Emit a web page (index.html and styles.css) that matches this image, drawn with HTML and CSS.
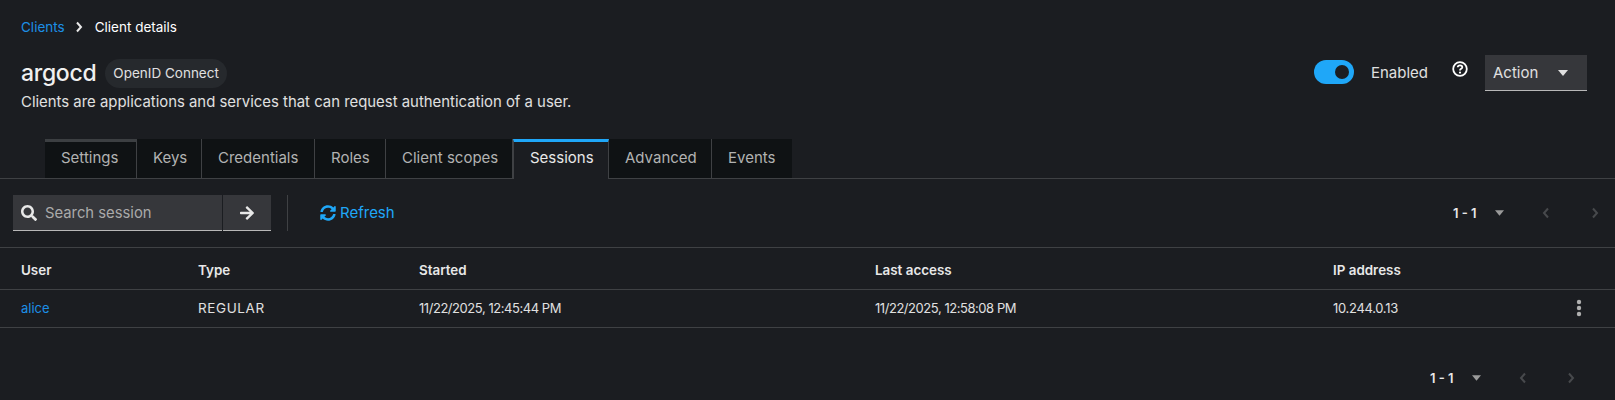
FILE: index.html
```html
<!DOCTYPE html>
<html lang="en">
<head>
  <meta charset="UTF-8" />
  <title>Client details</title>
  <link rel="stylesheet" href="styles.css">
</head>
<body>
  <header class="page-head">
    <nav class="crumbs">
      <a href="#">Clients</a>
      <svg class="crumb-sep" viewBox="0 0 8 12"><path d="M2 1.500 6 6l-4 4.500" /></svg>
      <span>Client details</span>
    </nav>
    <div class="title-row">
      <div class="title-main">
        <div class="title-line">
          <h1>argocd</h1>
          <span class="badge">OpenID Connect</span>
        </div>
        <p class="desc">Clients are applications and services that can request authentication of a user.</p>
      </div>
      <div class="title-actions">
        <span class="toggle"><span class="knob"></span></span>
        <span class="toggle-label">Enabled</span>
        <svg class="help" viewBox="0 0 16 16">
          <circle cx="8" cy="8" r="6.800" />
          <path d="M5.700 6.300C5.800 4.900 6.800 4.300 8 4.300c1.300 0 2.300.8 2.300 1.900 0 1.800-2.300 1.500-2.300 3.200" />
          <circle class="dot" cx="8" cy="11.600" r="1.100" />
        </svg>
        <button class="action">Action<svg class="caret" viewBox="0 0 10 6"><path d="M0 0h10L5 6z" /></svg></button>
      </div>
    </div>
  </header>

  <!-- Tabs -->
  <ul class="tabs">
    <li class="tab first">Settings</li>
    <li class="tab">Keys</li>
    <li class="tab">Credentials</li>
    <li class="tab">Roles</li>
    <li class="tab">Client scopes</li>
    <li class="tab current">Sessions</li>
    <li class="tab">Advanced</li>
    <li class="tab">Events</li>
  </ul>

  <!-- Toolbar -->
  <div class="toolbar">
    <div class="search">
      <svg class="search-icon" viewBox="0 0 512 512"><path d="M505 442.700L405.300 343c-4.500-4.500-10.600-7-17-7H372c27.600-35.300 44-79.700 44-128C416 93.100 322.900 0 208 0S0 93.100 0 208s93.100 208 208 208c48.300 0 92.700-16.400 128-44v16.300c0 6.400 2.500 12.500 7 17l99.700 99.700c9.400 9.400 24.600 9.400 33.900 0l28.300-28.300c9.400-9.400 9.400-24.600.1-34zM208 336c-70.700 0-128-57.200-128-128 0-70.700 57.200-128 128-128 70.700 0 128 57.200 128 128 0 70.700-57.200 128-128 128z" /></svg>
      <span>Search session</span>
    </div>
    <button class="go">
      <svg viewBox="0 0 448 512"><path d="M190.500 66.900l22.200-22.200c9.400-9.400 24.600-9.400 33.900 0L441 239c9.400 9.400 9.400 24.600 0 33.900L246.600 467.300c-9.400 9.400-24.600 9.400-33.900 0l-22.200-22.200c-9.500-9.500-9.300-25 .4-34.300L311.400 296H24c-13.300 0-24-10.700-24-24v-32c0-13.300 10.700-24 24-24h287.400L190.900 101.200c-9.800-9.300-10-24.800-.4-34.300z" /></svg>
    </button>
    <span class="divider"></span>
    <a class="refresh" href="#">
      <svg viewBox="0 0 512 512"><path d="M370.720 133.280C339.458 104.008 298.888 87.962 255.848 88c-77.458.068-144.328 53.178-162.791 126.850-1.344 5.363-6.122 9.150-11.651 9.150H24.103c-7.498 0-13.194-6.807-11.807-14.176C33.933 94.924 134.813 8 256 8c66.448 0 126.791 26.136 171.315 68.685L463.030 40.970C478.149 25.851 504 36.559 504 57.941V192c0 13.255-10.745 24-24 24H345.941c-21.382 0-32.090-25.851-16.971-40.971l41.750-41.749zM32 296h134.059c21.382 0 32.090 25.851 16.971 40.971l-41.750 41.750c31.262 29.273 71.835 45.319 114.876 45.280 77.418-.07 144.315-53.144 162.787-126.849 1.344-5.363 6.122-9.150 11.651-9.150h57.304c7.498 0 13.194 6.807 11.807 14.176C478.067 417.076 377.187 504 256 504c-66.448 0-126.791-26.136-171.315-68.685L48.970 471.030C33.851 486.149 8 475.441 8 454.059V320c0-13.255 10.745-24 24-24z" /></svg>
      Refresh
    </a>
    <div class="pager top">
      <b>1 - 1</b>
      <svg class="pager-caret" viewBox="0 0 10 6"><path d="M0 0h10L5 6z" /></svg>
      <svg class="pager-arrow prev" viewBox="0 0 8 12"><path d="M6 1.500 2 6l4 4.500" /></svg>
      <svg class="pager-arrow" viewBox="0 0 8 12"><path d="M2 1.500 6 6l-4 4.500" /></svg>
    </div>
  </div>

  <!-- Sessions table -->
  <table class="sessions">
    <thead>
      <tr><th class="c-user">User</th><th class="c-type">Type</th><th class="c-start">Started</th><th class="c-last">Last access</th><th class="c-ip">IP address</th><th></th></tr>
    </thead>
    <tbody>
      <tr>
        <td><a href="#">alice</a></td>
        <td class="kind">REGULAR</td>
        <td class="stamp">11/22/2025, 12:45:44 PM</td>
        <td class="stamp">11/22/2025, 12:58:08 PM</td>
        <td class="addr">10.244.0.13</td>
        <td class="c-menu"><svg class="kebab" viewBox="0 0 6 18"><circle cx="3" cy="3" r="2.200" /><circle cx="3" cy="9" r="2.200" /><circle cx="3" cy="15" r="2.200" /></svg></td>
      </tr>
    </tbody>
  </table>

  <div class="pager bottom">
    <b>1 - 1</b>
    <svg class="pager-caret" viewBox="0 0 10 6"><path d="M0 0h10L5 6z" /></svg>
    <svg class="pager-arrow prev" viewBox="0 0 8 12"><path d="M6 1.500 2 6l4 4.500" /></svg>
    <svg class="pager-arrow" viewBox="0 0 8 12"><path d="M2 1.500 6 6l-4 4.500" /></svg>
  </div>
</body>
</html>
```

FILE: styles.css
```css
:root {
  --bg: #1b1d21;
  --blue: #1fa7f8;
  --link: #1c8fe6;
  --text: #e0e0e0;
  --line: #3f4144;
  --field: #36373b;
}
* { box-sizing: border-box; margin: 0; padding: 0; }
html, body { height: 400px; overflow: hidden; }
body {
  background: var(--bg);
  color: var(--text);
  font-family: "Inter", "Open Sans", sans-serif;
  font-size: 14px;
}
a { color: var(--link); text-decoration: none; }

/* Header */
.page-head { padding: 18px 16px 0 21px; height: 139px; }
.crumbs { display: flex; align-items: center; height: 18px; font-size: 13.500px; color: #fff; }
.crumb-sep { width: 8px; height: 12px; margin: 0 12px 0 10px; }
.crumb-sep path { fill: none; stroke: #e8e8e8; stroke-width: 2; }
.title-row { display: flex; justify-content: space-between; margin-top: 18px; }
.title-line { display: flex; align-items: center; height: 30px; gap: 9px; margin-top: 4px; }
h1 { font-size: 23px; font-weight: 500; color: #f0f0f0; letter-spacing: -0.3px; }
.badge {
  background: #26292d;
  border-radius: 15px;
  height: 29px;
  line-height: 29px;
  padding: 0 8px;
  font-size: 13.500px;
  color: #e0e0e0;
}
.desc { font-size: 14.900px; margin-top: 5px; color: #e0e0e0; }
.title-actions { display: flex; align-items: flex-start; height: 36px; margin: 1px 12px 0 0; }
.toggle {
  width: 40px;
  height: 24px;
  margin-top: 5px;
  border-radius: 12px;
  background: var(--blue);
  display: flex;
  align-items: center;
  justify-content: flex-end;
  padding-right: 5px;
}
.knob { width: 14px; height: 14px; border-radius: 50%; background: #1b1d21; }
.toggle-label { margin: 9px 0 0 17px; font-size: 15px; line-height: 18px; }
.help { width: 16px; height: 16px; margin: 6px 17px 0 24px; }
.help circle, .help path { fill: none; stroke: #fff; stroke-width: 1.800; }
.help .dot { fill: #fff; stroke: none; }
.action {
  width: 102px;
  height: 36px;
  display: flex;
  align-items: center;
  justify-content: space-between;
  padding: 0 19px 0 8px;
  background: var(--field);
  border: none;
  border-bottom: 1px solid #b8b8b8;
  color: var(--text);
  font: inherit;
  font-size: 15px;
}
.caret { width: 10px; height: 6px; fill: #e0e0e0; }

/* Tabs */
.tabs { display: flex; list-style: none; height: 40px; padding-left: 45px; border-bottom: 1px solid var(--line); }
.tab {
  background: #0f1214;
  height: 39px;
  padding: 1px 0 0 16px;
  line-height: 36px;
  font-size: 15px;
  color: #b2b2b2;
  border-right: 1px solid var(--line);
}
.tab:nth-child(1) { width: 92px; border-top: 3px solid #3c3f42; padding-top: 0; line-height: 32px; }
.tab:nth-child(2) { width: 65px; }
.tab:nth-child(3) { width: 113px; }
.tab:nth-child(4) { width: 71px; }
.tab:nth-child(5) { width: 127px; }
.tab:nth-child(6) { width: 96px; }
.tab:nth-child(7) { width: 103px; }
.tab:nth-child(8) { width: 80px; border-right: none; }
.tab.current {
  background: var(--bg);
  height: 40px;
  line-height: 32px;
  color: #e8e8e8;
  border-top: 3px solid var(--blue);
  border-left: 1px solid var(--line);
  padding: 0 0 0 16px;
}

/* Toolbar */
.toolbar {
  display: flex;
  align-items: center;
  height: 69px;
  padding: 16px 16px 16px 13px;
  border-bottom: 1px solid var(--line);
}
.search {
  width: 209px;
  height: 36px;
  display: flex;
  align-items: center;
  gap: 8px;
  padding-left: 8px;
  background: var(--field);
  border-bottom: 1px solid #b8b8b8;
  color: #aaa;
  font-size: 14.800px;
}
.search-icon { width: 16px; height: 16px; fill: #e8e8e8; }
.go {
  width: 48px;
  height: 36px;
  margin-left: 1px;
  background: var(--field);
  border: none;
  border-bottom: 1px solid #b8b8b8;
}
.go svg { width: 14px; height: 16px; fill: #e8e8e8; vertical-align: middle; }
.divider { width: 1px; height: 36px; margin: 0 32px 0 16px; background: var(--line); }
.refresh { display: flex; align-items: center; gap: 4px; font-size: 15px; color: var(--blue); padding-bottom: 1px; }
.refresh svg { width: 16px; height: 16px; fill: var(--blue); }

/* Pagination */
.pager { display: flex; align-items: center; font-size: 13px; color: #e8e8e8; }
.pager b { font-weight: 600; width: 24px; white-space: nowrap; }
.pager.top { margin-left: auto; }
.pager.bottom { justify-content: flex-end; margin: 42px 40px 0 0; }
.pager-caret { width: 9px; height: 6px; margin: 0 38px 0 18px; fill: #9a9a9a; }
.pager-arrow { width: 8px; height: 12px; }
.pager-arrow.prev { margin-right: 40px; }
.pager.top .pager-arrow.prev { margin-right: 41px; }
.pager-arrow path { fill: none; stroke: #47494c; stroke-width: 2; }

/* Table */
.sessions { width: 100%; border-collapse: collapse; table-layout: fixed; }
.sessions th, .sessions td { text-align: left; padding: 0 0 0 21px; border-bottom: 1px solid var(--line); white-space: nowrap; }
.sessions th { height: 41px; padding-top: 3px; font-size: 13.400px; font-weight: 600; color: #e8e8e8; }
.sessions td { height: 38px; font-size: 13px; color: #e0e0e0; }
.sessions .kind { font-size: 13.500px; letter-spacing: 0.6px; }
.sessions .stamp { letter-spacing: -0.45px; }
.sessions .addr { letter-spacing: -0.3px; }
.c-user { width: 177px; }
.c-type { width: 221px; }
.c-start { width: 456px; }
.c-last { width: 458px; }
.c-ip { width: 223px; }
.sessions td.c-menu { padding: 0; }
.kebab { width: 6px; height: 18px; fill: #b0b0b0; display: block; margin-left: 41px; }
```
